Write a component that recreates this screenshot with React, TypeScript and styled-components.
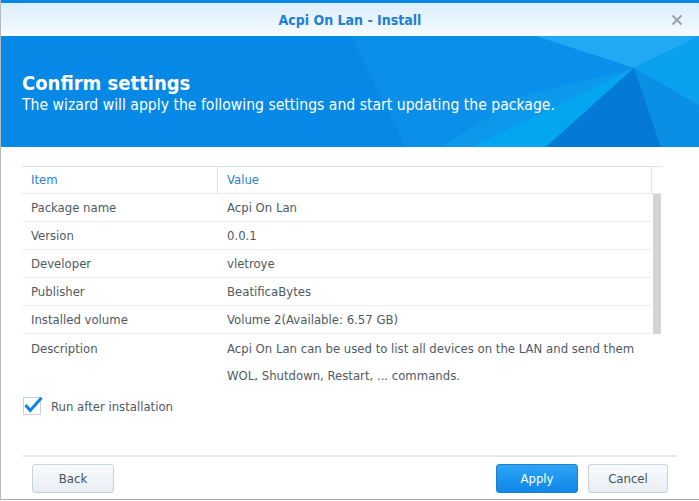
import React from "react";
import styled, { createGlobalStyle } from "styled-components";

const FONT = `"DejaVu Sans Condensed", "DejaVu Sans", sans-serif`;

const GlobalStyle = createGlobalStyle`
  html, body { margin: 0; padding: 0; background: #ffffff; }
  body { font-family: ${FONT}; }
  * { box-sizing: border-box; }
`;

const Window = styled.div`
  position: relative;
  width: 699px;
  height: 500px;
  display: flex;
  flex-direction: column;
  background: #ffffff;
  border-left: 1px solid #b4b9be;
  border-bottom: 1px solid #a9aeb3;
  overflow: hidden;
`;

const TitleBar = styled.div`
  height: 36px;
  flex: none;
  border-top: 3px solid #0689e6;
  background: linear-gradient(#dbeefd, #f6fbff);
  display: grid;
  grid-template-columns: 1fr auto 1fr;
  align-items: center;
`;

const Title = styled.div`
  grid-column: 2;
  color: #1d7fd6;
  font-size: 14px;
  font-weight: bold;
`;

const CloseBtn = styled.div`
  grid-column: 3;
  justify-self: end;
  margin-right: 16px;
  display: flex;
  align-items: center;
`;

const Banner = styled.div`
  position: relative;
  height: 111px;
  flex: none;
  background: #0689e6;
  padding: 35px 0 0 21px;
  color: #ffffff;
  overflow: hidden;
`;

const BannerArt = styled.svg`
  position: absolute;
  left: 0;
  top: 0;
`;

const BannerText = styled.div`
  position: relative;
`;

const Heading = styled.div`
  font-size: 20px;
  font-weight: bold;
  line-height: 24px;
`;

const Sub = styled.div`
  font-size: 15.6px;
  line-height: 20px;
`;

const Content = styled.div`
  flex: 1;
  padding: 19px 38px 0 21px;
  display: flex;
  flex-direction: column;
`;

const Table = styled.div`
  display: flex;
  flex-direction: column;
  width: 640px;
`;

const HeaderRow = styled.div`
  display: grid;
  grid-template-columns: 196px 434px 10px;
  height: 28px;
  border-top: 1px solid #d4e2f1;
  border-bottom: 1px solid #e6e9ec;
`;

const HeaderCell = styled.div<{ $divider?: boolean }>`
  color: #2e7fd4;
  font-size: 13px;
  padding: 0 0 1px 9px;
  display: flex;
  align-items: center;
  border-right: ${(p) => (p.$divider ? "1px solid #dde7f2" : "none")};
`;

const Body = styled.div`
  display: grid;
  grid-template-columns: 630px 10px;
`;

const Rows = styled.div`
  display: flex;
  flex-direction: column;
`;

const Row = styled.div<{ $last?: boolean }>`
  display: grid;
  grid-template-columns: 196px 1fr;
  min-height: 28px;
  border-bottom: ${(p) => (p.$last ? "none" : "1px solid #ebedef")};
`;

const Cell = styled.div<{ $lh?: number }>`
  color: #4f5a64;
  font-size: 13px;
  line-height: ${(p) => p.$lh ?? 26}px;
  padding: 1px 8px 0 9px;
`;

const ScrollTrack = styled.div`
  padding-left: 1px;
  padding-right: 1px;
`;

const ScrollThumb = styled.div`
  height: 140px;
  background: #d4d4d4;
`;

const CheckRow = styled.label`
  display: flex;
  align-items: center;
  gap: 8px;
  margin-top: 8px;
  margin-left: 1px;
  color: #4f5a64;
  font-size: 13px;
`;

const Footer = styled.div`
  flex: none;
  margin: 0 22px;
  border-top: 2px solid #e6e8ea;
  height: 44px;
  display: flex;
  align-items: flex-start;
  padding: 7px 9px 0;
  gap: 10px;
`;

const Spacer = styled.div`
  flex: 1;
`;

const Button = styled.button<{ $primary?: boolean; $w?: number }>`
  width: ${(p) => p.$w ?? 82}px;
  height: 29px;
  border-radius: 3px;
  font-family: ${FONT};
  font-size: 13px;
  cursor: pointer;
  border: 1px solid ${(p) => (p.$primary ? "#1a7fd3" : "#c8d1da")};
  color: ${(p) => (p.$primary ? "#ffffff" : "#46525e")};
  background: ${(p) =>
    p.$primary
      ? "linear-gradient(#2fa4f4, #0d87e9)"
      : "linear-gradient(#f8fbfd, #e9eef3)"};
`;

const rows: [string, string][] = [
  ["Package name", "Acpi On Lan"],
  ["Version", "0.0.1"],
  ["Developer", "vletroye"],
  ["Publisher", "BeatificaBytes"],
  ["Installed volume", "Volume 2(Available: 6.57 GB)"],
];

export default function App() {
  return (
    <>
      <GlobalStyle />
      <Window>
        <TitleBar>
          <Title>Acpi On Lan - Install</Title>
          <CloseBtn>
            <svg width="12" height="12" viewBox="0 0 12 12">
              <path d="M1.5 1.5 L10.5 10.5 M10.5 1.5 L1.5 10.5" stroke="#9aa3ac" strokeWidth="2" />
            </svg>
          </CloseBtn>
        </TitleBar>
        <Banner>
          <BannerArt width="699" height="111" viewBox="0 0 699 111">
            <polygon points="350,0 535,0 633,32 520,111 405,111" fill="#0a90ea" />
            <polygon points="535,0 699,0 633,32" fill="#22a9f3" />
            <polygon points="633,32 699,0 699,70" fill="#0aa1ee" />
            <polygon points="470,111 633,32 545,111" fill="#04a6ef" />
            <polygon points="520,60 633,32 470,111 440,111" fill="#0d9cec" opacity="0.7" />
            <polygon points="545,111 633,32 660,111" fill="#0479d6" />
            <polygon points="633,32 699,70 699,111 660,111" fill="#0990e4" />
          </BannerArt>
          <BannerText>
            <Heading>Confirm settings</Heading>
            <Sub>The wizard will apply the following settings and start updating the package.</Sub>
          </BannerText>
        </Banner>
        <Content>
          <Table>
            <HeaderRow>
              <HeaderCell $divider>Item</HeaderCell>
              <HeaderCell $divider>Value</HeaderCell>
              <div />
            </HeaderRow>
            <Body>
              <Rows>
                {rows.map(([k, v]) => (
                  <Row key={k}>
                    <Cell>{k}</Cell>
                    <Cell>{v}</Cell>
                  </Row>
                ))}
                <Row $last>
                  <Cell $lh={27}>Description</Cell>
                  <Cell $lh={27}>
                    Acpi On Lan can be used to list all devices on the LAN and send them WOL,
                    Shutdown, Restart, ... commands.
                  </Cell>
                </Row>
              </Rows>
              <ScrollTrack>
                <ScrollThumb />
              </ScrollTrack>
            </Body>
          </Table>
          <CheckRow>
            <svg width="20" height="18" viewBox="0 0 20 18">
              <rect x="0.5" y="0.5" width="17" height="17" fill="#ffffff" stroke="#c6d2de" />
              <path d="M2.5 8 L7.2 13.5 L18.5 0.8" fill="none" stroke="#0b84e4" strokeWidth="3" />
            </svg>
            Run after installation
          </CheckRow>
        </Content>
        <Footer>
          <Button>Back</Button>
          <Spacer />
          <Button $primary>Apply</Button>
          <Button $w={80}>Cancel</Button>
        </Footer>
      </Window>
    </>
  );
}
